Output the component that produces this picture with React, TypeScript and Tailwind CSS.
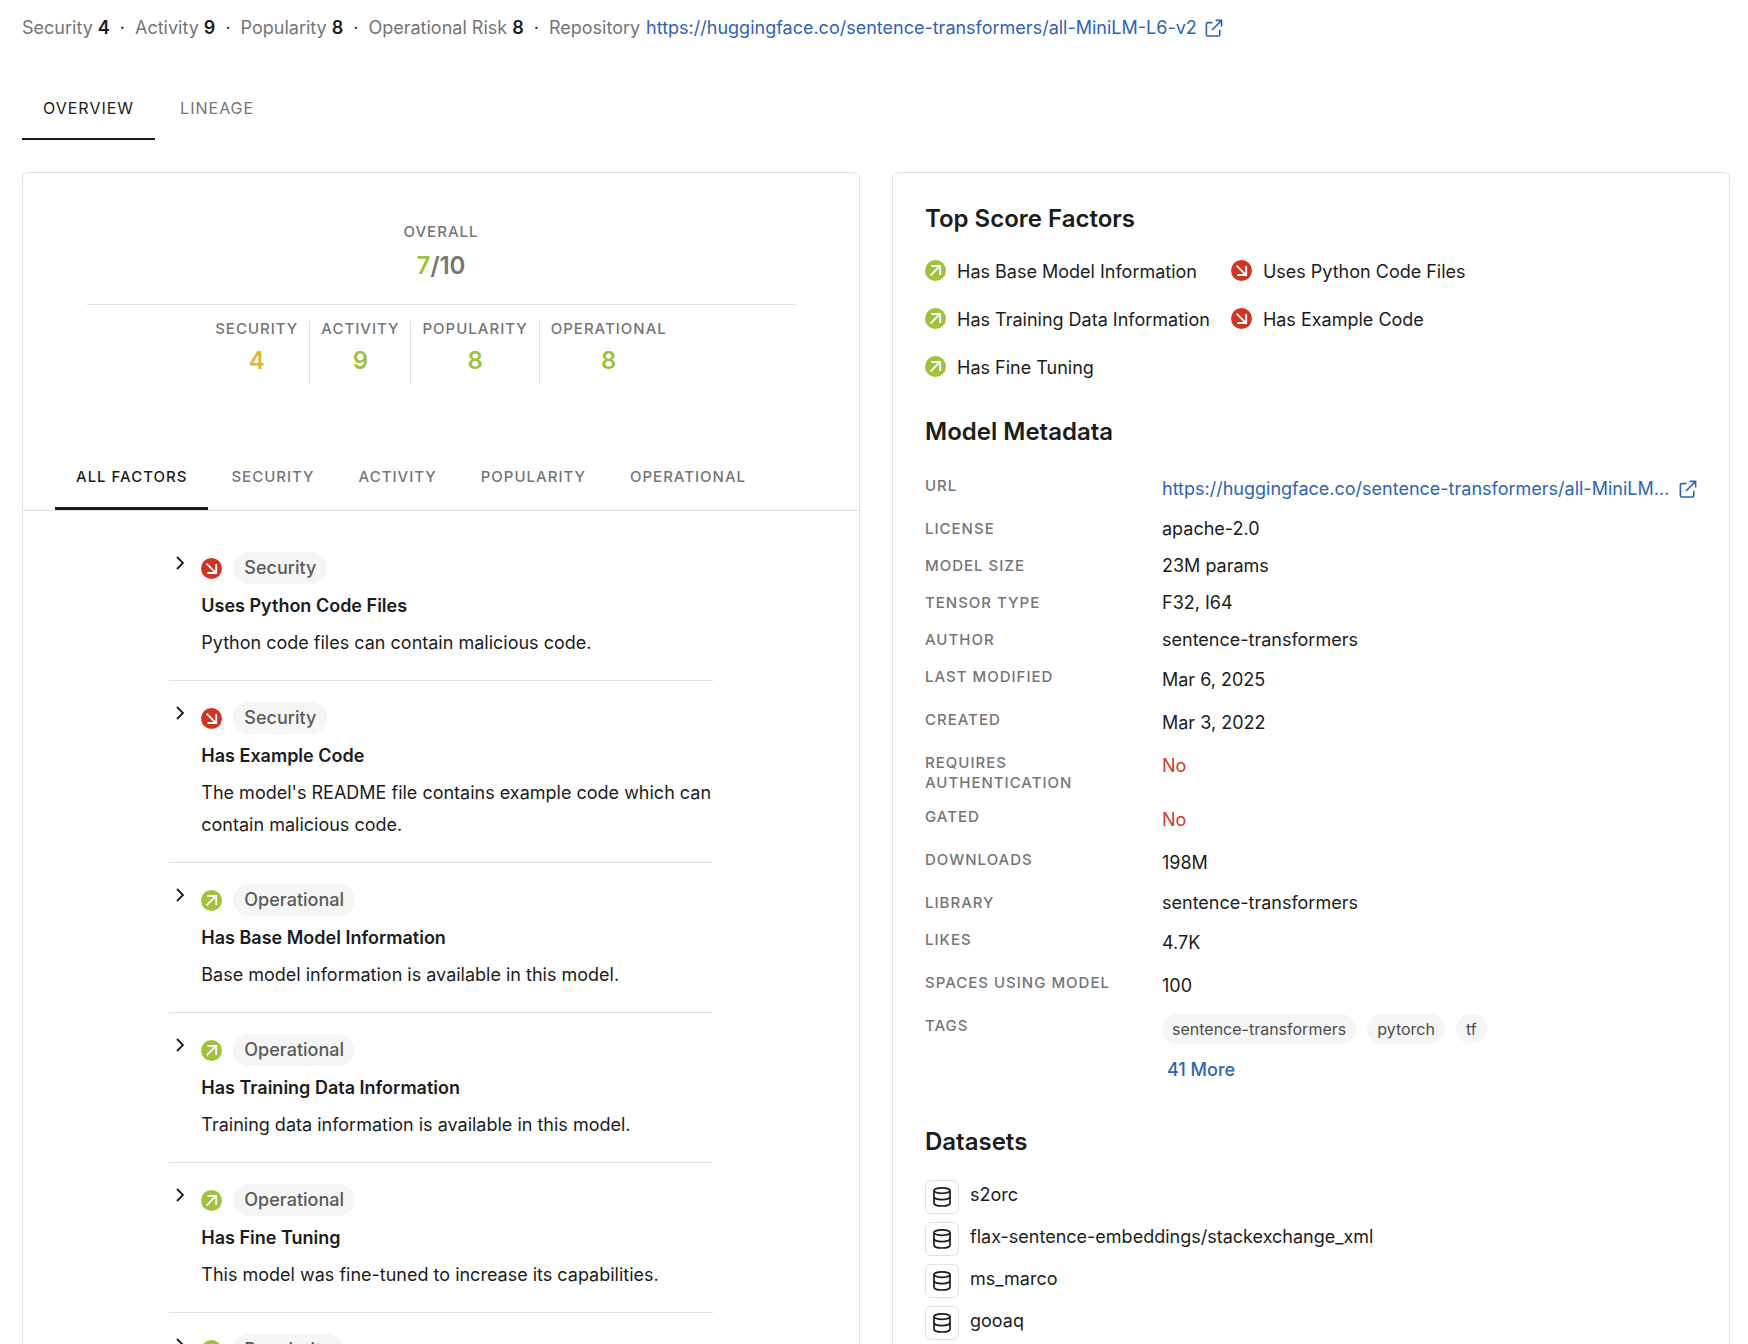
import { ReactNode, useState } from "react";

type Trend = "good" | "bad";

interface Factor {
  title: string;
  category: string;
  trend: Trend;
  description: string;
}

interface MetaRow {
  label: string;
  value: ReactNode;
  size: "short" | "tall";
}

const REPO_URL = "https://huggingface.co/sentence-transformers/all-MiniLM-L6-v2";

const summary = [
  { label: "Security", value: 4 },
  { label: "Activity", value: 9 },
  { label: "Popularity", value: 8 },
  { label: "Operational Risk", value: 8 },
];

const scores = [
  { label: "Security", value: 4, color: "text-[#dfb53c]" },
  { label: "Activity", value: 9, color: "text-[#9fc041]" },
  { label: "Popularity", value: 8, color: "text-[#9fc041]" },
  { label: "Operational", value: 8, color: "text-[#9fc041]" },
];

const factors: Factor[] = [
  {
    title: "Uses Python Code Files",
    category: "Security",
    trend: "bad",
    description: "Python code files can contain malicious code.",
  },
  {
    title: "Has Example Code",
    category: "Security",
    trend: "bad",
    description: "The model's README file contains example code which can contain malicious code.",
  },
  {
    title: "Has Base Model Information",
    category: "Operational",
    trend: "good",
    description: "Base model information is available in this model.",
  },
  {
    title: "Has Training Data Information",
    category: "Operational",
    trend: "good",
    description: "Training data information is available in this model.",
  },
  {
    title: "Has Fine Tuning",
    category: "Operational",
    trend: "good",
    description: "This model was fine-tuned to increase its capabilities.",
  },
  {
    title: "Popular Model",
    category: "Popularity",
    trend: "good",
    description: "This model is popular.",
  },
];

const goodFactors = ["Has Base Model Information", "Has Training Data Information", "Has Fine Tuning"];
const badFactors = ["Uses Python Code Files", "Has Example Code"];

const tags = ["sentence-transformers", "pytorch", "tf"];
const datasets = ["s2orc", "flax-sentence-embeddings/stackexchange_xml", "ms_marco", "gooaq"];

function TrendIcon({ trend }: { trend: Trend }) {
  return (
    <svg viewBox="0 0 21 21" className="size-[21px] shrink-0" aria-hidden="true">
      <circle cx="10.5" cy="10.5" r="10.5" fill={trend === "good" ? "#9fc43c" : "#d23423"} />
      <path
        d={trend === "good" ? "M5.6 15.4 14.6 6.4M6.4 6h8.8v9" : "M5.6 5.6l9 9M6.4 15h8.8V6"}
        fill="none"
        stroke="#fff"
        strokeWidth="1.8"
      />
    </svg>
  );
}

function ExternalIcon() {
  return (
    <svg
      viewBox="0 0 18 18"
      className="size-[18px] shrink-0"
      fill="none"
      stroke="currentColor"
      strokeWidth="1.6"
      strokeLinejoin="round"
      aria-hidden="true"
    >
      <path d="M7.5 3.6H2.6A1.2 1.2 0 0 0 1.4 4.8v11A1.2 1.2 0 0 0 2.6 17h11a1.2 1.2 0 0 0 1.2-1.2v-5" />
      <path d="M10.6 1.4h6v6M16.4 1.6 7 11" />
    </svg>
  );
}

function DatabaseIcon() {
  return (
    <svg viewBox="0 0 20 20" className="size-5" fill="none" stroke="currentColor" strokeWidth="1.7" aria-hidden="true">
      <ellipse cx="10" cy="3.6" rx="8" ry="2.7" />
      <path d="M2 3.6v12.6c0 1.6 3.6 2.8 8 2.8s8-1.2 8-2.8V3.6" />
      <path d="M2 9.8c0 1.6 3.6 2.8 8 2.8s8-1.2 8-2.8" />
    </svg>
  );
}

function ChevronIcon() {
  return (
    <svg viewBox="0 0 8 14" className="h-3.5 w-2" fill="none" stroke="currentColor" strokeWidth="1.8" aria-hidden="true">
      <path d="M1 1l6 6-6 6" />
    </svg>
  );
}

const metadata: MetaRow[] = [
  {
    label: "URL",
    size: "tall",
    value: (
      <a href={REPO_URL} className="flex items-center gap-2 text-[#2f63b5]">
        <span className="truncate">{REPO_URL}</span>
        <ExternalIcon />
      </a>
    ),
  },
  { label: "License", value: "apache-2.0", size: "short" },
  { label: "Model Size", value: "23M params", size: "short" },
  { label: "Tensor Type", value: "F32, I64", size: "short" },
  { label: "Author", value: "sentence-transformers", size: "short" },
  { label: "Last Modified", value: "Mar 6, 2025", size: "tall" },
  { label: "Created", value: "Mar 3, 2022", size: "tall" },
  { label: "Requires Authentication", value: <span className="text-[#cf3a2e]">No</span>, size: "tall" },
  { label: "Gated", value: <span className="text-[#cf3a2e]">No</span>, size: "tall" },
  { label: "Downloads", value: "198M", size: "tall" },
  { label: "Library", value: "sentence-transformers", size: "short" },
  { label: "Likes", value: "4.7K", size: "tall" },
  { label: "Spaces Using Model", value: "100", size: "tall" },
];

const labelClass = "text-[15px] leading-5 tracking-[1px] uppercase font-medium text-[#757575]";

export default function App() {
  const [pageTab, setPageTab] = useState("Overview");
  const [factorTab, setFactorTab] = useState("All Factors");

  return (
    <div className="h-screen overflow-hidden bg-white pr-[18px] pl-[22px] font-['Inter',sans-serif] text-[18px] leading-8 text-[#1c1c1c]">
      <div className="flex items-center pt-3 text-[#757575]">
        {summary.map((item) => (
          <span key={item.label} className="whitespace-pre">
            {item.label} <span className="font-semibold text-[#1c1c1c]">{item.value}</span>
            <span className="px-2.5 text-[#1c1c1c]">·</span>
          </span>
        ))}
        <span className="mr-1.5">Repository</span>
        <a href={REPO_URL} className="flex items-center gap-2 text-[#2f63b5]">
          {REPO_URL}
          <ExternalIcon />
        </a>
      </div>

      <div role="tablist" className="mt-[34px] flex gap-1">
        {["Overview", "Lineage"].map((tab) => (
          <button
            key={tab}
            role="tab"
            aria-selected={pageTab === tab}
            onClick={() => setPageTab(tab)}
            className={`border-b-2 px-[21px] py-5 text-[16px] leading-5 tracking-[1px] uppercase ${
              pageTab === tab ? "border-[#1c1c1c] text-[#1c1c1c]" : "border-transparent text-[#757575]"
            }`}
          >
            {tab}
          </button>
        ))}
      </div>

      <div className="mt-8 grid grid-cols-2 items-start gap-8">
        <section className="rounded-md border border-[#e2e2e2]">
          <div className="mx-16 flex flex-col items-center border-b border-[#e2e2e2] pt-[49px] pb-[22px]">
            <div className={labelClass}>Overall</div>
            <div className="mt-2 text-[24px] font-semibold text-[#757575]">
              <span className="text-[#9fc041]">7</span>/10
            </div>
          </div>
          <div className="mt-4 flex justify-center divide-x divide-[#e2e2e2]">
            {scores.map((score) => (
              <div key={score.label} className="flex h-16 flex-col items-center px-[11px]">
                <div className="text-[15px] leading-4 font-medium tracking-[1px] text-[#757575] uppercase">
                  {score.label}
                </div>
                <div className={`mt-2 text-[24px] font-semibold ${score.color}`}>{score.value}</div>
              </div>
            ))}
          </div>

          <div role="tablist" className="mt-[62px] flex gap-0.5 border-b border-[#e2e2e2] px-8">
            {["All Factors", "Security", "Activity", "Popularity", "Operational"].map((tab) => (
              <button
                key={tab}
                role="tab"
                aria-selected={factorTab === tab}
                onClick={() => setFactorTab(tab)}
                className={`border-b-3 px-[21px] py-5 text-[15px] leading-5 font-medium tracking-[1px] uppercase ${
                  factorTab === tab ? "border-[#1c1c1c] text-[#1c1c1c]" : "border-transparent text-[#757575]"
                }`}
              >
                {tab}
              </button>
            ))}
          </div>

          <ul className="mx-auto mt-5 w-[65%] divide-y divide-[#e2e2e2]">
            {factors.map((factor) => (
              <li key={factor.title} className="flex items-start py-[21px]">
                <button aria-label={`Expand ${factor.title}`} className="mt-1 w-8 shrink-0 pl-[7px]">
                  <ChevronIcon />
                </button>
                <div>
                  <div className="flex items-center gap-[11px]">
                    <TrendIcon trend={factor.trend} />
                    <span className="rounded-full bg-[#f6f6f6] px-[11px] font-medium text-[#5a5a5a]">
                      {factor.category}
                    </span>
                  </div>
                  <h3 className="mt-1.5 font-semibold">{factor.title}</h3>
                  <p className="mt-[5px]">{factor.description}</p>
                </div>
              </li>
            ))}
          </ul>
        </section>

        <section className="rounded-md border border-[#e2e2e2] px-8">
          <h2 className="mt-[30px] text-[24px] font-semibold">Top Score Factors</h2>
          <div className="mt-[21px] flex gap-[21px]">
            <ul className="space-y-4">
              {goodFactors.map((name) => (
                <li key={name} className="flex items-start gap-[11px]">
                  <span className="pt-1">
                    <TrendIcon trend="good" />
                  </span>
                  {name}
                </li>
              ))}
            </ul>
            <ul className="space-y-4">
              {badFactors.map((name) => (
                <li key={name} className="flex items-start gap-[11px]">
                  <span className="pt-1">
                    <TrendIcon trend="bad" />
                  </span>
                  {name}
                </li>
              ))}
            </ul>
          </div>

          <h2 className="mt-8 text-[24px] font-semibold">Model Metadata</h2>
          <dl className="mt-6">
            {metadata.map((row) => (
              <div key={row.label} className={`flex ${row.size === "tall" ? "min-h-[43px] pb-2.5" : "h-[37px]"}`}>
                <dt className={`w-[237px] shrink-0 pt-1 pr-8 ${labelClass}`}>{row.label}</dt>
                <dd className={`min-w-0 leading-7 ${row.size === "tall" ? "pt-[3px]" : ""}`}>{row.value}</dd>
              </div>
            ))}
            <div className="flex">
              <dt className={`w-[237px] shrink-0 pt-1 ${labelClass}`}>Tags</dt>
              <dd>
                <div className="flex gap-[11px] pt-0.5">
                  {tags.map((tag) => (
                    <span key={tag} className="rounded-full bg-[#f6f6f6] px-2.5 text-[16px] leading-[30px] text-[#4d4d4d]">
                      {tag}
                    </span>
                  ))}
                </div>
                <button className="mt-2.5 px-[5px] font-medium text-[#2f63b5]">41 More</button>
              </dd>
            </div>
          </dl>

          <h2 className="mt-10 text-[24px] font-semibold">Datasets</h2>
          <ul className="mt-[22px] space-y-2 pb-8">
            {datasets.map((name) => (
              <li key={name} className="flex gap-[11px]">
                <span className="flex size-[34px] items-center justify-center rounded-md border border-[#e2e2e2]">
                  <DatabaseIcon />
                </span>
                <span className="leading-[30px]">{name}</span>
              </li>
            ))}
          </ul>
        </section>
      </div>
    </div>
  );
}
